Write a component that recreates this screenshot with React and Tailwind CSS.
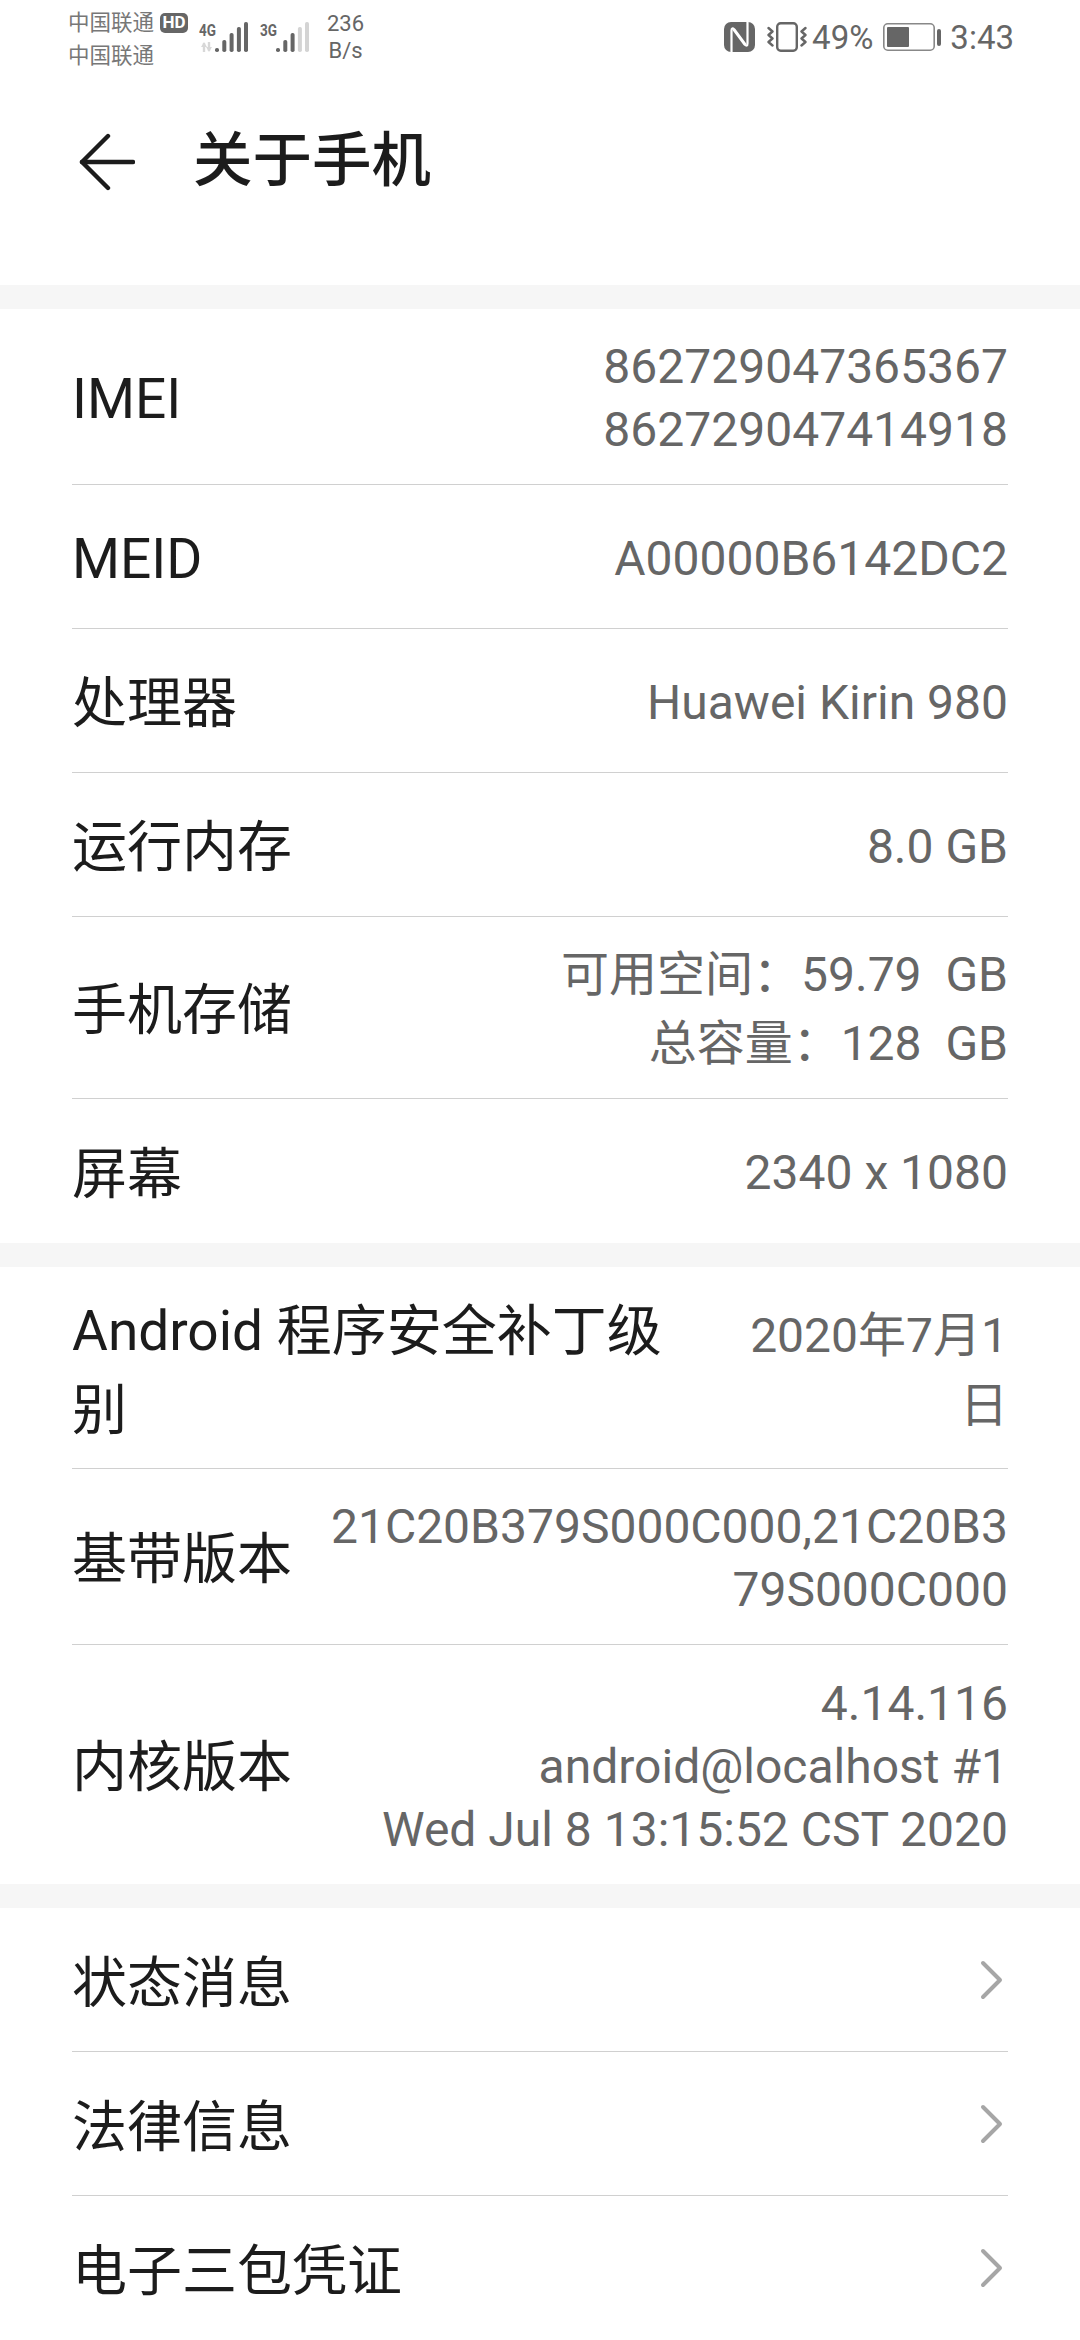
const FONT = 'font-[Roboto,"Noto_Sans_CJK_SC",sans-serif]'

const INFO_A = [
  { label: ['IMEI'], value: ['862729047365367', '862729047414918'], row: 'h-[176px]', lead: 'leading-[63px]' },
  { label: ['MEID'], value: ['A00000B6142DC2'], row: 'h-[144px]', lead: 'leading-[63px]' },
  { label: ['处理器'], value: ['Huawei Kirin 980'], row: 'h-[144px]', lead: 'leading-[63px]' },
  { label: ['运行内存'], value: ['8.0 GB'], row: 'h-[144px]', lead: 'leading-[63px]' },
  { label: ['手机存储'], value: ['可用空间：59.79  GB', '总容量：128  GB'], row: 'h-[182px]', lead: 'leading-[69px]' },
  { label: ['屏幕'], value: ['2340 x 1080'], row: 'h-[144px]', lead: 'leading-[63px]' },
]

const INFO_B = [
  { label: ['Android 程序安全补丁级', '别'], value: ['2020年7月1', '日'], row: 'h-[202px]', lead: 'leading-[70px] mt-[4px]' },
  { label: ['基带版本'], value: ['21C20B379S000C000,21C20B3', '79S000C000'], row: 'h-[176px]', lead: 'leading-[63px]' },
  { label: ['内核版本'], value: ['4.14.116', 'android@localhost #1', 'Wed Jul 8 13:15:52 CST 2020'], row: 'h-[239px]', lead: 'leading-[63px]' },
]

const LINKS = ['状态消息', '法律信息', '电子三包凭证']

function Signal({ label, dark, arrows }) {
  const bars = [
    { x: 18, top: 26 },
    { x: 25.3, top: 18 },
    { x: 32.6, top: 11 },
    { x: 39.9, top: 5 },
    { x: 47, top: 0 },
  ]
  return (
    <svg className="overflow-visible" width="49" height="30" viewBox="0 0 49 30">
      <text x="0" y="13.5" fontFamily="Roboto" fontWeight="700" fontSize="17" fill="#666" textLength="17" lengthAdjust="spacingAndGlyphs">{label}</text>
      {arrows && (
        <g stroke="#d8d8d8" strokeWidth="2.4" fill="#d8d8d8">
          <path d="M5 30V21" />
          <path d="M10 20V29" />
          <path d="M5 20l-3 5h6z" stroke="none" />
          <path d="M10 30l-3-5h6z" stroke="none" />
        </g>
      )}
      {bars.map((b, i) => (
        <rect key={i} x={b.x - 2} y={b.top} width="4" height={30 - b.top} rx="1.8" fill={i < dark ? '#666' : '#d4d4d4'} />
      ))}
    </svg>
  )
}

function NfcIcon() {
  return (
    <svg width="31" height="30" viewBox="0 0 31 30">
      <rect width="31" height="30" rx="7" fill="#666" />
      <path d="M7.5 30V8.5Q7.5 5 10.5 7.5L21.5 22.5" fill="none" stroke="#fff" strokeWidth="2.2" />
      <path d="M23.5 0V21.5Q23.5 25 20.5 22.5L9.5 7.5" fill="none" stroke="#fff" strokeWidth="2.2" />
    </svg>
  )
}

function VibrateIcon() {
  return (
    <svg width="40" height="30" viewBox="0 0 40 30" fill="none" stroke="#666" strokeLinecap="round" strokeLinejoin="round">
      <rect x="10.2" y="1.2" width="19.6" height="27.6" rx="3.5" strokeWidth="2.4" />
      <path d="M1.5 6l4 3.5-4 3.5 4 3.5-4 3.5 4 3.5" strokeWidth="2.4" />
      <path d="M38.5 6l-4 3.5 4 3.5-4 3.5 4 3.5-4 3.5" strokeWidth="2.4" />
    </svg>
  )
}

function BatteryIcon() {
  return (
    <svg width="58" height="28" viewBox="0 0 58 28">
      <rect x="0.8" y="0.8" width="50.4" height="26.4" rx="4" fill="none" stroke="#888" strokeWidth="1.6" />
      <rect x="4" y="4" width="22" height="20" rx="1" fill="#666" />
      <rect x="54" y="6" width="4" height="17" rx="2" fill="#666" />
    </svg>
  )
}

function Row({ item, last }) {
  return (
    <div className={`flex items-center justify-between ${item.row} ${last ? '' : 'border-b border-[#d0d0d0]'}`}>
      <div className="pt-[6px] text-[55px] leading-[79px] text-[#1c1c1c] whitespace-pre">
        {item.label.map((l) => <div key={l}>{l}</div>)}
      </div>
      <div className={`pt-[3px] text-right text-[48px] text-[#666666] whitespace-pre ${item.lead}`}>
        {item.value.map((v) => <div key={v}>{v}</div>)}
      </div>
    </div>
  )
}

export default function App() {
  return (
    <div className={`w-[1080px] h-[2340px] overflow-hidden bg-white ${FONT}`}>
      {/* status bar */}
      <div className="flex h-[74px] items-center justify-between pl-[68px] pr-[66px] text-[#666666]">
        <div className="mt-[4px] flex items-center">
          <div className="w-[120px] text-[21.5px] leading-[33px] text-[#777777]">
            <div className="flex items-center">
              <span>中国联通</span>
              <span className="ml-[6px] flex h-[20px] w-[28px] items-center justify-center rounded-[5px] bg-[#666666] text-[17px] leading-none font-bold text-white">HD</span>
            </div>
            <div>中国联通</div>
          </div>
          <div className="ml-[11px] -mt-[4px] flex items-center gap-[12px]">
            <Signal label="4G" dark={5} arrows />
            <Signal label="3G" dark={3} />
          </div>
          <div className="ml-[18px] -mt-[4px] w-[37px] text-center text-[22px] leading-[27px] whitespace-nowrap">
            <div>236</div>
            <div>B/s</div>
          </div>
        </div>
        <div className="flex items-center text-[33px] leading-none">
          <NfcIcon />
          <div className="ml-[12px]"><VibrateIcon /></div>
          <span className="ml-[5px]">49%</span>
          <div className="ml-[10px]"><BatteryIcon /></div>
          <span className="ml-[9px]">3:43</span>
        </div>
      </div>

      {/* title */}
      <div className="flex h-[211px] items-center pb-[36px] pl-[79px]">
        <svg width="56" height="58" viewBox="0 0 56 58" fill="none" stroke="#1c1c1c" strokeWidth="4.4" strokeLinecap="round" strokeLinejoin="round">
          <path d="M54 29H3" />
          <path d="M29 3L3 29L29 55" />
        </svg>
        <h1 className="ml-[58px] text-[59.5px] leading-none font-medium text-[#1c1c1c]">关于手机</h1>
      </div>

      <div className="h-[24px] bg-[#f6f6f6]" />

      <div className="px-[72px]">
        {INFO_A.map((item, i) => (
          <Row key={item.label[0]} item={item} last={i === INFO_A.length - 1} />
        ))}
      </div>

      <div className="h-[24px] bg-[#f6f6f6]" />

      <div className="px-[72px]">
        {INFO_B.map((item, i) => (
          <Row key={item.label[0]} item={item} last={i === INFO_B.length - 1} />
        ))}
      </div>

      <div className="h-[24px] bg-[#f6f6f6]" />

      <div className="px-[72px]">
        {LINKS.map((text, i) => (
          <div key={text} className={`flex h-[144px] items-center justify-between ${i < LINKS.length - 1 ? 'border-b border-[#d0d0d0]' : ''}`}>
            <span className="pt-[7px] text-[55px] leading-[79px] text-[#1c1c1c]">{text}</span>
            <svg className="mr-[3px]" width="26" height="40" viewBox="0 0 26 40" fill="none" stroke="#a6a6a6" strokeWidth="4" strokeLinecap="round" strokeLinejoin="round">
              <path d="M4 3L21 20L4 37" />
            </svg>
          </div>
        ))}
      </div>
    </div>
  )
}
